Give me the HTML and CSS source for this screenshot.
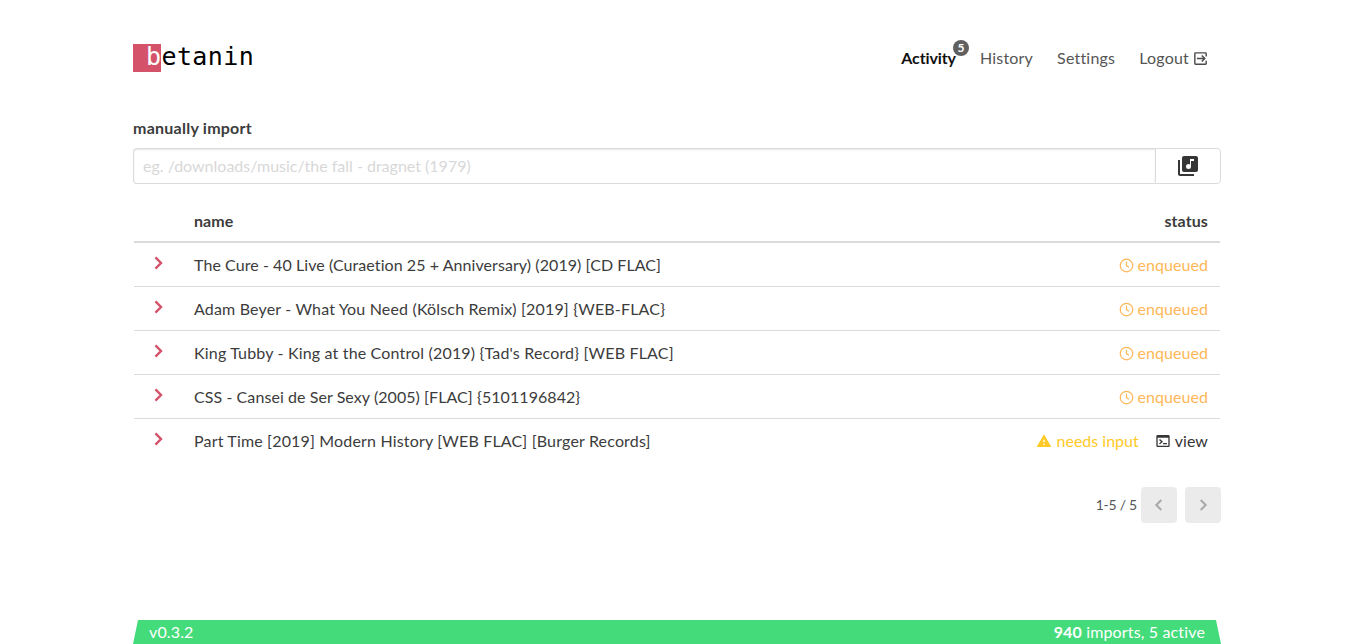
FILE: index.html
```html
<!DOCTYPE html>
<html lang="en">
<head>
<meta charset="utf-8">
<title>betanin</title>
<link rel="stylesheet" href="styles.css">
</head>
<body>
<div class="page">
  <header class="topbar">
    <a class="logo"><span class="logo-mark"></span><span class="logo-text">betanin</span></a>
    <nav class="nav">
      <a class="nav-item active">Activity<span class="badge">5</span></a>
      <a class="nav-item">History</a>
      <a class="nav-item">Settings</a>
      <a class="nav-item logout">Logout
        <svg class="logout-icon" viewBox="0 0 24 24" width="17" height="17"><path d="M19 3H5a2 2 0 0 0-2 2v14a2 2 0 0 0 2 2h14a2 2 0 0 0 2-2v-4h-2v4H5V5h14v4h2V5a2 2 0 0 0-2-2zM14.500 7 13 8.400 15.600 11H7v2h8.600L13 15.600 14.500 17l5-5h3v0h-3z" fill="currentColor"/></svg>
      </a>
    </nav>
  </header>

  <section class="import">
    <label class="import-label">manually import</label>
    <div class="import-field">
      <input class="import-input" type="text" placeholder="eg. /downloads/music/the fall - dragnet (1979)">
      <button class="import-btn" type="button">
        <svg viewBox="0 0 24 24" width="24" height="24"><path fill="currentColor" d="M20 2H8c-1.100 0-2 .9-2 2v12c0 1.100.9 2 2 2h12c1.100 0 2-.9 2-2V4c0-1.100-.9-2-2-2zm-2 5h-3v5.500a2.500 2.500 0 0 1-5 0 2.500 2.500 0 0 1 2.500-2.500c.57 0 1.080.19 1.500.51V5h4v2zM4 6H2v14c0 1.100.9 2 2 2h14v-2H4V6z"/></svg>
      </button>
    </div>
  </section>

  <table class="torrents">
    <thead>
      <tr><th class="col-arrow"></th><th class="col-name">name</th><th class="col-status">status</th></tr>
    </thead>
    <tbody>
      <tr>
        <td class="col-arrow"><svg class="chevron" viewBox="0 0 24 24" width="18" height="18"><path d="M8.600 4.600 16 12l-7.400 7.400" fill="none" stroke="currentColor" stroke-width="3.200"/></svg></td>
        <td class="col-name">The Cure - 40 Live (Curaetion 25 + Anniversary) (2019) [CD FLAC]</td>
        <td class="col-status"><span class="status enqueued"><svg viewBox="0 0 24 24" width="15" height="15"><circle cx="12" cy="12" r="10" fill="none" stroke="currentColor" stroke-width="2"/><path d="M12 6v6.500l4 2" fill="none" stroke="currentColor" stroke-width="2"/></svg> enqueued</span></td>
      </tr>
      <tr>
        <td class="col-arrow"><svg class="chevron" viewBox="0 0 24 24" width="18" height="18"><path d="M8.600 4.600 16 12l-7.400 7.400" fill="none" stroke="currentColor" stroke-width="3.200"/></svg></td>
        <td class="col-name wide">Adam Beyer - What You Need (Kölsch Remix) [2019] {WEB-FLAC}</td>
        <td class="col-status"><span class="status enqueued"><svg viewBox="0 0 24 24" width="15" height="15"><circle cx="12" cy="12" r="10" fill="none" stroke="currentColor" stroke-width="2"/><path d="M12 6v6.500l4 2" fill="none" stroke="currentColor" stroke-width="2"/></svg> enqueued</span></td>
      </tr>
      <tr>
        <td class="col-arrow"><svg class="chevron" viewBox="0 0 24 24" width="18" height="18"><path d="M8.600 4.600 16 12l-7.400 7.400" fill="none" stroke="currentColor" stroke-width="3.200"/></svg></td>
        <td class="col-name wide">King Tubby - King at the Control (2019) {Tad's Record} [WEB FLAC]</td>
        <td class="col-status"><span class="status enqueued"><svg viewBox="0 0 24 24" width="15" height="15"><circle cx="12" cy="12" r="10" fill="none" stroke="currentColor" stroke-width="2"/><path d="M12 6v6.500l4 2" fill="none" stroke="currentColor" stroke-width="2"/></svg> enqueued</span></td>
      </tr>
      <tr>
        <td class="col-arrow"><svg class="chevron" viewBox="0 0 24 24" width="18" height="18"><path d="M8.600 4.600 16 12l-7.400 7.400" fill="none" stroke="currentColor" stroke-width="3.200"/></svg></td>
        <td class="col-name">CSS - Cansei de Ser Sexy (2005) [FLAC] {5101196842}</td>
        <td class="col-status"><span class="status enqueued"><svg viewBox="0 0 24 24" width="15" height="15"><circle cx="12" cy="12" r="10" fill="none" stroke="currentColor" stroke-width="2"/><path d="M12 6v6.500l4 2" fill="none" stroke="currentColor" stroke-width="2"/></svg> enqueued</span></td>
      </tr>
      <tr>
        <td class="col-arrow"><svg class="chevron" viewBox="0 0 24 24" width="18" height="18"><path d="M8.600 4.600 16 12l-7.400 7.400" fill="none" stroke="currentColor" stroke-width="3.200"/></svg></td>
        <td class="col-name wide">Part Time [2019] Modern History [WEB FLAC] [Burger Records]</td>
        <td class="col-status">
          <span class="status needs"><svg viewBox="0 0 24 24" width="16" height="16"><path fill="currentColor" d="M1 21h22L12 2 1 21zm12-3h-2v-2h2v2zm0-4h-2v-4h2v4z"/></svg> needs input</span>
          <a class="view"><svg viewBox="0 0 24 24" width="16" height="16"><path fill="currentColor" d="M20 3H4a2 2 0 0 0-2 2v14a2 2 0 0 0 2 2h16a2 2 0 0 0 2-2V5a2 2 0 0 0-2-2zm0 16H4V7h16v12zM12 17h6v-2h-6v2zM7.500 17l4.500-4-4.500-4L6 10.400 9 13l-3 2.600L7.500 17z"/></svg> view</a>
        </td>
      </tr>
    </tbody>
  </table>

  <div class="pagination">
    <span class="page-info">1-5 / 5</span>
    <button class="page-btn" type="button"><svg viewBox="0 0 24 24" width="16" height="16"><path d="M15.400 4.600 8 12l7.400 7.400" fill="none" stroke="currentColor" stroke-width="3"/></svg></button>
    <button class="page-btn" type="button"><svg viewBox="0 0 24 24" width="16" height="16"><path d="M8.600 4.600 16 12l-7.400 7.400" fill="none" stroke="currentColor" stroke-width="3"/></svg></button>
  </div>

  <footer class="footer">
    <span class="version">v0.3.2</span>
    <span class="stats"><strong>940</strong> imports, 5 active</span>
  </footer>
</div>
</body>
</html>
```
FILE: styles.css
```css
* { box-sizing: border-box; }
html, body { margin: 0; padding: 0; background: #fff; }
body {
  font-family: "Lato", "Open Sans", sans-serif;
  font-size: 16px;
  color: #3c3c3c;
}
.page {
  width: 1088px;
  height: 644px;
  margin: 0 auto;
  display: flex;
  flex-direction: column;
  overflow: hidden;
}
.topbar {
  display: flex;
  justify-content: space-between;
  align-items: flex-start;
  padding-top: 44px;
  height: 107px;
}
.logo { display: flex; position: relative; height: 28px; }
.logo-mark { width: 28px; height: 28px; background: #d4536b; }
.logo-text {
  position: absolute;
  left: 13px;
  top: -1px;
  font-family: "DejaVu Sans Mono", monospace;
  font-size: 25px;
  line-height: 28px;
  color: #000;
  letter-spacing: .4px;
}
.logo-text::first-letter { color: #fff; }
.nav { display: flex; gap: 24px; padding-right: 12px; padding-top: 3px; letter-spacing: .2px; }
.nav-item { position: relative; color: #555; line-height: 22px; display: flex; align-items: center; gap: 3px; }
.nav-item.active { font-weight: 700; color: #111; letter-spacing: -.1px; }
.badge {
  position: absolute;
  right: -13px;
  top: -7px;
  width: 16px;
  height: 16px;
  border-radius: 50%;
  background: #606060;
  color: #fff;
  font-size: 12px;
  font-weight: 700;
  line-height: 16px;
  text-align: center;
}
.logout-icon { color: #4a4a4a; }
.import { padding-top: 10px; }
.import-label { display: block; font-weight: 700; line-height: 22px; height: 31px; letter-spacing: .25px; }
.import-field { display: flex; height: 36px; }
.import-input {
  flex: 1;
  min-width: 0;
  height: 36px;
  border: 1px solid #dbdbdb;
  border-right: 0;
  border-radius: 4px 0 0 4px;
  padding: 0 9px 2px;
  font: inherit;
  box-shadow: inset 0 1px 2px rgba(10,10,10,.1);
  outline: none;
}
.import-input::placeholder { color: #d8d8d8; opacity: 1; }
.import-btn {
  width: 66px;
  height: 36px;
  border: 1px solid #dbdbdb;
  border-radius: 0 4px 4px 0;
  background: #fff;
  color: #363636;
  display: flex;
  align-items: center;
  justify-content: center;
  padding: 0;
}
.torrents {
  margin-top: 20px;
  width: 1086px;
  margin-left: 1px;
  border-collapse: collapse;
  table-layout: fixed;
}
.torrents th { height: 38px; font-weight: 700; border-bottom: 2px solid #dbdbdb; padding: 0 12px 4px; letter-spacing: .1px; }
.torrents td { height: 44px; border-bottom: 1px solid #dbdbdb; padding: 0 12px; letter-spacing: .07px; }
.torrents td.wide { letter-spacing: .17px; }
.torrents tbody tr:last-child td { border-bottom: 0; }
.col-arrow { width: 48px; }
.torrents .col-name { text-align: left; width: 760px; }
.torrents .col-status { text-align: right; }
.chevron { display: block; color: #d4536b; margin: -2px 0 0 3px; }
.status svg, .view svg { vertical-align: -2px; }
.enqueued { color: #ffb758; }
.enqueued svg { margin-right: -1px; }
.needs { color: #ffc928; margin-right: 12px; letter-spacing: 0; }
.view { color: #363636; }
.pagination {
  display: flex;
  align-items: center;
  justify-content: flex-end;
  gap: 8px;
  margin-top: 25px;
}
.page-info { font-size: 14px; color: #555; margin: -2px -4px 0 0; letter-spacing: -.25px; }
.page-btn {
  width: 36px;
  height: 36px;
  margin-left: 0;
  border: 0;
  border-radius: 4px;
  background: #ebebeb;
  color: #a8a8a8;
  display: flex;
  align-items: center;
  justify-content: center;
  padding: 0;
}
.footer {
  margin-top: auto;
  height: 24px;
  background: #44db7a;
  color: #fff;
  display: flex;
  justify-content: space-between;
  align-items: center;
  padding: 0 16px 2px;
  letter-spacing: .15px;
  clip-path: polygon(5px 0, calc(100% - 5px) 0, 100% 100%, 0 100%);
}
.footer strong { font-weight: 700; }
```
